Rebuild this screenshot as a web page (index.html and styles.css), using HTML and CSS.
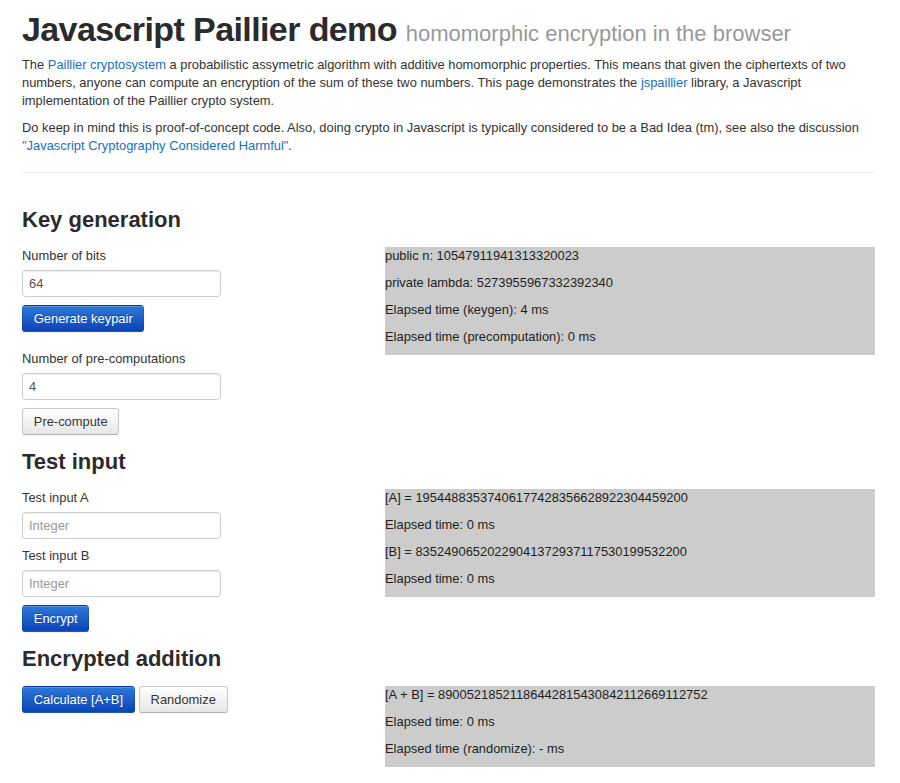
FILE: index.html
```html
<!DOCTYPE html>
<html>
<head>
<meta charset="utf-8">
<title>Javascript Paillier demo</title>
<link rel="stylesheet" href="styles.css">
</head>
<body>
<div class="container">
  <h1 class="title">Javascript Paillier demo <small>homomorphic encryption in the browser</small></h1>
  <p>The <a href="#">Paillier cryptosystem</a> a probabilistic assymetric algorithm with additive homomorphic properties. This means that given the ciphertexts of two numbers, anyone can compute an encryption of the sum of these two numbers. This page demonstrates the <a href="#">jspaillier</a> library, a Javascript implementation of the Paillier crypto system.</p>
  <p>Do keep in mind this is proof-of-concept code. Also, doing crypto in Javascript is typically considered to be a Bad Idea (tm), see also the discussion <a href="#">"Javascript Cryptography Considered Harmful"</a>.</p>
  <hr class="divider">

  <h3 class="section-title">Key generation</h3>
  <div class="row">
    <div class="col-left">
      <div class="form-group">
        <label class="field-label">Number of bits</label>
        <input class="field" type="text" value="64">
        <button class="btn btn-primary">Generate keypair</button>
      </div>
      <div class="form-group last">
        <label class="field-label">Number of pre-computations</label>
        <input class="field" type="text" value="4">
        <button class="btn">Pre-compute</button>
      </div>
    </div>
    <div class="col-right">
      <div class="result">
        <p>public n: 10547911941313320023</p>
        <p>private lambda: 5273955967332392340</p>
        <p>Elapsed time (keygen): 4 ms</p>
        <p>Elapsed time (precomputation): 0 ms</p>
      </div>
    </div>
  </div>

  <h3 class="section-title">Test input</h3>
  <div class="row">
    <div class="col-left">
      <label class="field-label">Test input A</label>
      <input class="field" type="text" placeholder="Integer">
      <label class="field-label">Test input B</label>
      <input class="field" type="text" placeholder="Integer">
      <button class="btn btn-primary">Encrypt</button>
    </div>
    <div class="col-right">
      <div class="result">
        <p>[A] = 19544883537406177428356628922304459200</p>
        <p>Elapsed time: 0 ms</p>
        <p>[B] = 83524906520229041372937117530199532200</p>
        <p>Elapsed time: 0 ms</p>
      </div>
    </div>
  </div>

  <h3 class="section-title">Encrypted addition</h3>
  <div class="row">
    <div class="col-left">
      <div class="btn-row">
        <button class="btn btn-primary">Calculate [A+B]</button>
        <button class="btn">Randomize</button>
      </div>
    </div>
    <div class="col-right">
      <div class="result">
        <p>[A + B] = 89005218521186442815430842112669112752</p>
        <p>Elapsed time: 0 ms</p>
        <p>Elapsed time (randomize): - ms</p>
      </div>
    </div>
  </div>
</div>
</body>
</html>
```

FILE: styles.css
```css
html, body {
  margin: 0;
  padding: 0;
  background: #fff;
}

body {
  font-family: "Liberation Sans", Arial, Helvetica, sans-serif;
  font-size: 12.9px;
  line-height: 18px;
  color: #333;
}

.container {
  width: 853px;
  margin-left: 22px;
  padding-top: 2px;
}

a {
  color: #1470c4;
  text-decoration: none;
}

p {
  margin: 0 0 9px;
}

.title {
  margin: 9px 0;
  font-size: 34px;
  letter-spacing: -0.6px;
  line-height: 36px;
  font-weight: bold;
  color: #2b2b2b;
}

.title small {
  font-size: 22px;
  letter-spacing: 0;
  font-weight: normal;
  color: #999;
  line-height: 1;
}

.divider {
  margin: 17px 0 28px;
  border: 0;
  border-top: 1px solid #eee;
  border-bottom: 1px solid #fff;
  height: 0;
}

.section-title {
  margin: 9px 0;
  font-size: 22px;
  line-height: 36px;
  font-weight: bold;
  color: #2b2b2b;
}

.row {
  display: grid;
  grid-template-columns: 345px 1fr;
  column-gap: 18px;
  align-items: start;
}

.col-left {
  display: flow-root;
}

.form-group {
  margin-bottom: 18px;
}

.form-group.last {
  margin-bottom: 0;
}

.field-label {
  display: block;
  margin-bottom: 5px;
  line-height: 18px;
}

.field {
  display: block;
  box-sizing: border-box;
  width: 199px;
  height: 27px;
  margin: 0 0 8px;
  padding: 3px 6px;
  font-family: "Liberation Sans", Arial, Helvetica, sans-serif;
  font-size: 12.9px;
  line-height: 18px;
  color: #555;
  background: #fff;
  border: 1px solid #ccc;
  border-radius: 3.6px;
  box-shadow: inset 0 1px 1px rgba(0, 0, 0, 0.075);
  outline: none;
}

.field::placeholder {
  color: #999;
}

.btn {
  display: inline-block;
  box-sizing: border-box;
  height: 27px;
  margin: 0;
  padding: 3px 10.8px;
  font-family: "Liberation Sans", Arial, Helvetica, sans-serif;
  font-size: 12.9px;
  line-height: 18px;
  color: #333;
  text-shadow: 0 1px 1px rgba(255, 255, 255, 0.75);
  background-color: #f5f5f5;
  background-image: linear-gradient(to bottom, #ffffff, #e6e6e6);
  border: 1px solid #c8c8c8;
  border-bottom-color: #b3b3b3;
  border-radius: 3.6px;
  box-shadow: inset 0 1px 0 rgba(255, 255, 255, 0.2), 0 1px 2px rgba(0, 0, 0, 0.05);
  cursor: pointer;
  vertical-align: top;
}

.btn-primary {
  color: #fff;
  text-shadow: 0 -1px 0 rgba(0, 0, 0, 0.25);
  background-color: #1a5ccc;
  background-image: linear-gradient(to bottom, #2d79d8, #0b43b8);
  border-color: rgba(0, 0, 0, 0.1) rgba(0, 0, 0, 0.1) rgba(0, 0, 0, 0.25);
}

.btn-row {
  display: flex;
  gap: 4px;
}

.result {
  display: flow-root;
  background: #ccc;
  color: #1e1e1e;
}

.result p {
  margin: 0 0 9px;
  line-height: 18px;
}
```
